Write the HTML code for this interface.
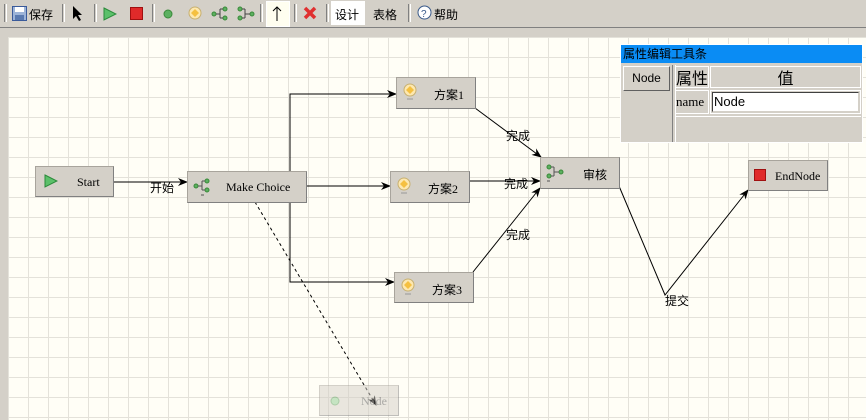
<!DOCTYPE html>
<html><head><meta charset="utf-8"><style>
*{margin:0;padding:0}
body{width:866px;height:420px;overflow:hidden;background:#d4d0c8;font-family:"Liberation Sans","Noto Sans CJK SC",sans-serif;position:relative}
.tb{position:absolute;left:0;top:0;width:866px;height:27px;border-bottom:1px solid #808080;background:#d4d0c8;font-size:12px}
.tb span{position:absolute;top:6px}
.sep{position:absolute;top:4px;width:1px;height:18px;border-left:1px solid #808080;border-right:1px solid #fff}
.canvas{position:absolute;left:8px;top:37px;width:858px;height:383px;background-color:#fffef6;
background-image:linear-gradient(to right,#e4e2da 1px,transparent 1px),linear-gradient(to bottom,#e4e2da 1px,transparent 1px);
background-size:20px 20px;background-position:0px 0px}
.node{position:absolute;background:#d4d0c8;border:1px solid #a8a49c;border-right-color:#808080;border-bottom-color:#808080;font-family:"Liberation Serif","Noto Sans CJK SC",serif;font-size:12px;box-sizing:border-box}
.node .t{position:absolute;top:8px}
.lbl{position:absolute;font-size:12px;color:#000}
</style></head><body>
<div class="tb">
 <div class="sep" style="left:4px"></div>
 <svg style="position:absolute;left:12px;top:6px" width="15" height="15"><rect x="0.5" y="0.5" width="14" height="14" fill="#9db4d8" stroke="#3a5a9a"/><rect x="3" y="1" width="9" height="5" fill="#fff"/><rect x="3" y="9" width="9" height="5" fill="#5a7ab0"/></svg>
 <span style="left:29px">保存</span>
 <div class="sep" style="left:62px"></div>
 <svg style="position:absolute;left:72px;top:5px" width="12" height="17"><path d="M1 1 L1 14 L4 11 L7 16 L9 15 L6 10 L10 10 Z" fill="#000"/></svg>
 <div class="sep" style="left:94px"></div>
 <svg style="position:absolute;left:103px;top:7px" width="14" height="14"><path d="M1 1 L13 7 L1 13 Z" fill="#5cc06a" stroke="#2a8a3a"/></svg>
 <svg style="position:absolute;left:130px;top:7px" width="13" height="13"><rect x="0.5" y="0.5" width="12" height="12" fill="#e02a2a" stroke="#a01010"/></svg>
 <div class="sep" style="left:152px"></div>
 <svg style="position:absolute;left:163px;top:9px" width="10" height="10"><circle cx="5" cy="5" r="4" fill="#5cb060" stroke="#3a8a3a"/></svg>
 <svg style="position:absolute;left:188px;top:6px" width="14" height="14"><circle cx="7" cy="7" r="6" fill="#fde8b0" stroke="#c8b070"/><path d="M7 3 L11 7 L7 11 L3 7Z" fill="#f5c040"/></svg>
 <svg style="position:absolute;left:211px;top:6px" width="18" height="15"><g fill="#5cb060" stroke="#3a8a3a"><circle cx="3" cy="8" r="2"/><circle cx="14" cy="3" r="2"/><circle cx="14" cy="12" r="2"/></g><path d="M5 8 H9 M9 3 V12 M9 3 H12 M9 12 H12" stroke="#444" fill="none"/></svg>
 <svg style="position:absolute;left:237px;top:6px" width="18" height="15"><g fill="#5cb060" stroke="#3a8a3a"><circle cx="3" cy="3" r="2"/><circle cx="3" cy="12" r="2"/><circle cx="15" cy="8" r="2"/></g><path d="M5 3 H8 M5 12 H8 M8 3 V12 M8 8 H13" stroke="#444" fill="none"/></svg>
 <div class="sep" style="left:260px"></div>
 <div style="position:absolute;left:266px;top:1px;width:22px;height:24px;background:#fffef0;border:1px solid #fff"></div>
 <svg style="position:absolute;left:271px;top:5px" width="12" height="17"><path d="M6 16 V2 M2 6 L6 2 L10 6" stroke="#000" fill="none"/></svg>
 <div class="sep" style="left:294px"></div>
 <svg style="position:absolute;left:303px;top:6px" width="14" height="14"><path d="M2 2 L12 12 M12 2 L2 12" stroke="#e03030" stroke-width="3.5"/></svg>
 <div class="sep" style="left:326px"></div>
 <div style="position:absolute;left:331px;top:1px;width:34px;height:24px;background:#fff"></div>
 <span style="left:335px">设计</span>
 <span style="left:373px">表格</span>
 <div class="sep" style="left:408px"></div>
 <svg style="position:absolute;left:417px;top:5px" width="15" height="15"><circle cx="7.5" cy="7.5" r="6.5" fill="#fff" stroke="#3a5a8a"/><text x="4" y="12" font-size="10" font-family="Liberation Sans" fill="#3a5a8a">?</text></svg>
 <span style="left:434px">帮助</span>
</div>
<div class="canvas"></div>
<svg style="position:absolute;left:0;top:0" width="866" height="420">
<defs><marker id="a" markerWidth="10" markerHeight="8" refX="9" refY="4" orient="auto" markerUnits="userSpaceOnUse"><path d="M0 0 L10 4 L0 8 L3 4Z" fill="#000"/></marker></defs>
<g stroke="#000" fill="none" stroke-width="1">
<line x1="113" y1="182" x2="187" y2="182" marker-end="url(#a)"/>
<path d="M290 171 V94 H396" marker-end="url(#a)"/>
<path d="M290 202 V282 H394" marker-end="url(#a)"/>
<line x1="306" y1="186" x2="390" y2="186" marker-end="url(#a)"/>
<line x1="475" y1="108" x2="541" y2="157" marker-end="url(#a)"/>
<line x1="469" y1="181" x2="540" y2="181" marker-end="url(#a)"/>
<line x1="473" y1="272" x2="540" y2="188" marker-end="url(#a)"/>
<path d="M619 186 L665 295 L748 190" marker-end="url(#a)"/>
<line x1="255" y1="202" x2="376" y2="405" stroke-dasharray="3,3" marker-end="url(#a)"/>
</g></svg>
<div class="lbl" style="left:150px;top:179px">开始</div>
<div class="lbl" style="left:506px;top:127px">完成</div>
<div class="lbl" style="left:504px;top:175px">完成</div>
<div class="lbl" style="left:506px;top:226px">完成</div>
<div class="lbl" style="left:665px;top:292px">提交</div>

<div class="node" style="left:35px;top:166px;width:79px;height:31px"><svg style="position:absolute;left:8px;top:7px" width="14" height="14"><path d="M1 1 L13 7 L1 13Z" fill="#5cc06a" stroke="#2a8a3a"/></svg><span class="t" style="left:41px">Start</span></div>
<div class="node" style="left:187px;top:171px;width:120px;height:32px"><svg style="position:absolute;left:5px;top:6px" width="18" height="18"><g fill="#5cb060" stroke="#3a8a3a"><circle cx="3" cy="8" r="2"/><circle cx="14" cy="3" r="2"/><circle cx="14" cy="12" r="2"/></g><path d="M5 8 H9 M9 3 V12 M9 3 H12 M9 12 H12 M8 17 H11" stroke="#555" fill="none"/></svg><span class="t" style="left:38px">Make Choice</span></div>
<div class="node" style="left:396px;top:77px;width:80px;height:32px"><svg style="position:absolute;left:6px;top:5px" width="14" height="18"><circle cx="7" cy="7" r="6" fill="#fde8b0" stroke="#c8b070"/><path d="M7 3 L11 7 L7 11 L3 7Z" fill="#f5c040"/><path d="M4 16 H10" stroke="#999"/></svg><span class="t" style="left:37px">方案1</span></div>
<div class="node" style="left:390px;top:171px;width:80px;height:32px"><svg style="position:absolute;left:6px;top:5px" width="14" height="18"><circle cx="7" cy="7" r="6" fill="#fde8b0" stroke="#c8b070"/><path d="M7 3 L11 7 L7 11 L3 7Z" fill="#f5c040"/><path d="M4 16 H10" stroke="#999"/></svg><span class="t" style="left:37px">方案2</span></div>
<div class="node" style="left:394px;top:272px;width:80px;height:31px"><svg style="position:absolute;left:6px;top:5px" width="14" height="18"><circle cx="7" cy="7" r="6" fill="#fde8b0" stroke="#c8b070"/><path d="M7 3 L11 7 L7 11 L3 7Z" fill="#f5c040"/><path d="M4 16 H10" stroke="#999"/></svg><span class="t" style="left:37px">方案3</span></div>
<div class="node" style="left:540px;top:157px;width:80px;height:32px"><svg style="position:absolute;left:5px;top:6px" width="18" height="18"><g fill="#5cb060" stroke="#3a8a3a"><circle cx="3" cy="3" r="2"/><circle cx="3" cy="12" r="2"/><circle cx="15" cy="8" r="2"/></g><path d="M5 3 H8 M5 12 H8 M8 3 V12 M8 8 H13 M1 17 H4" stroke="#555" fill="none"/></svg><span class="t" style="left:42px">审核</span></div>
<div class="node" style="left:748px;top:160px;width:80px;height:31px"><svg style="position:absolute;left:5px;top:8px" width="12" height="12"><rect x="0.5" y="0.5" width="11" height="11" fill="#e02a2a" stroke="#a01010"/></svg><span class="t" style="left:26px">EndNode</span></div>
<div class="node" style="left:319px;top:385px;width:80px;height:31px;opacity:0.5"><svg style="position:absolute;left:10px;top:10px" width="10" height="10"><circle cx="5" cy="5" r="4" fill="#8ccc90" stroke="#5a9a5a"/></svg><span class="t" style="left:41px;color:#555">Node</span></div>

<div style="position:absolute;left:620px;top:44px;width:243px;height:99px;background:#d4d0c8;border:1px solid #fff;box-sizing:border-box">
 <div style="height:18px;background:#0a8cf4;font-size:12px;line-height:18px;padding-left:2px;color:#000">属性编辑工具条</div>
 <div style="position:absolute;left:2px;top:21px;width:47px;height:25px;border:1px solid #fff;border-right-color:#606060;border-bottom-color:#606060;font-size:12px;text-align:center;line-height:23px;box-sizing:border-box">Node</div>
 <div style="position:absolute;left:51px;top:20px;width:2px;height:77px;border-left:1px solid #808080;border-right:1px solid #fff"></div>
 <div style="position:absolute;left:54px;top:21px;width:34px;height:22px;border:1px solid #fff;box-sizing:border-box;font-size:16px;line-height:20px;font-family:'Noto Sans CJK SC',sans-serif">属性</div>
 <div style="position:absolute;left:89px;top:21px;width:151px;height:22px;border:1px solid #fff;box-sizing:border-box;font-size:16px;line-height:20px;text-align:center;font-family:'Noto Sans CJK SC',sans-serif">值</div>
 <div style="position:absolute;left:54px;top:45px;width:34px;height:24px;border:1px solid #fff;box-sizing:border-box;font-size:13px;line-height:22px;font-family:'Liberation Serif',serif">name</div>
 <div style="position:absolute;left:89px;top:45px;width:151px;height:24px;border:1px solid #fff;box-sizing:border-box"><div style="margin:1px;height:18px;background:#fff;border:1px solid #404040;border-right-color:#d4d0c8;border-bottom-color:#d4d0c8;font-size:13px;line-height:18px;padding-left:1px">Node</div></div>
 <div style="position:absolute;left:54px;top:71px;width:186px;height:1px;background:#fff"></div>
</div>
</body></html>
